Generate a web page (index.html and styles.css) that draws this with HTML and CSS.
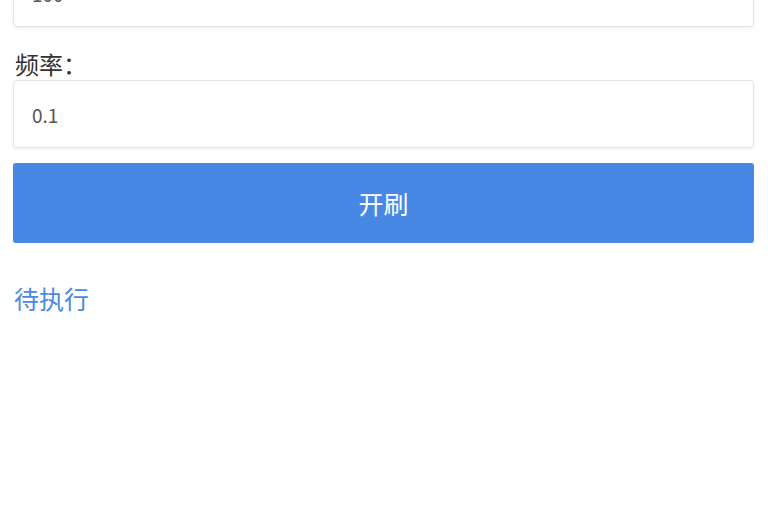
FILE: index.html
```html
<!DOCTYPE html>
<html>
<head>
<meta charset="utf-8">
<link rel="stylesheet" href="styles.css">
</head>
<body>
<div class="page">
  <div class="field">100</div>
  <div class="label">频率：</div>
  <div class="field">0.1</div>
  <button class="btn">开刷</button>
  <div class="status">待执行</div>
</div>
</body>
</html>
```
FILE: styles.css
```css
html, body {
  margin: 0;
  background: #ffffff;
  font-family: "Noto Sans CJK SC", "Noto Sans", sans-serif;
}
.page {
  margin-top: -41px;
  padding: 0 14px 0 13px;
  display: flex;
  flex-direction: column;
}
.field {
  height: 68px;
  box-sizing: border-box;
  border: 1px solid #e4e4e4;
  border-radius: 4px;
  box-shadow: 0 1px 3px rgba(0, 0, 0, 0.08);
  padding-left: 18px;
  display: flex;
  align-items: center;
  font-size: 19px;
  color: #555555;
}
.label {
  margin-top: 20px;
  height: 33px;
  line-height: 33px;
  font-size: 24px;
  color: #333333;
  padding-left: 2px;
}
.btn {
  margin-top: 15px;
  height: 80px;
  border: none;
  border-radius: 3px;
  background: #4688e4;
  color: #ffffff;
  font-family: inherit;
  font-size: 25px;
  padding: 0;
}
.status {
  margin-top: 39px;
  line-height: 32px;
  font-size: 25px;
  color: #4a8ae2;
  padding-left: 1px;
}
```
